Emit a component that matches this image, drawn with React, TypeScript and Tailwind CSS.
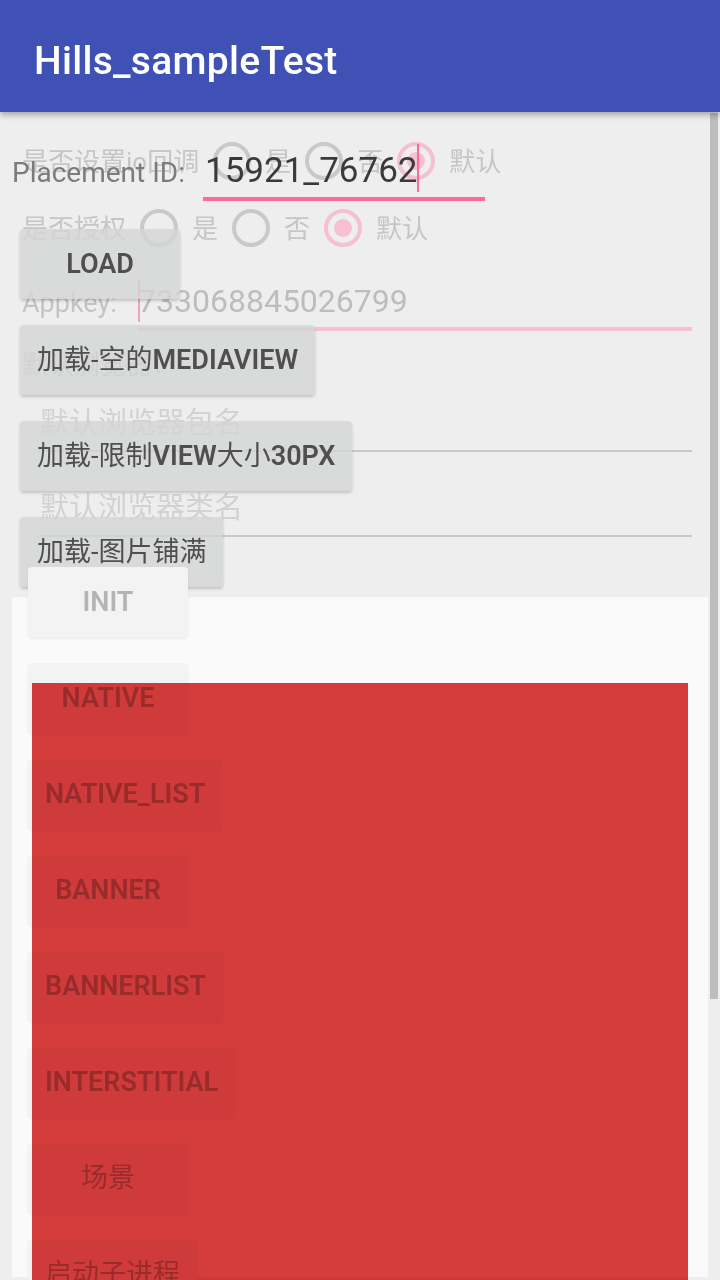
import React from 'react';

const font = "font-['Roboto','Noto_Sans_CJK_SC',sans-serif]";

// Latin runs get Roboto Medium look, CJK stays regular like on the device
function Label({ text }: { text: string }) {
  const parts = text.split(/([A-Za-z0-9_]+)/).filter(Boolean);
  return (
    <>
      {parts.map((p, i) =>
        /[A-Za-z0-9_]/.test(p) ? (
          <span key={i} className="font-semibold">{p}</span>
        ) : (
          <span key={i} className="font-normal">{p}</span>
        )
      )}
    </>
  );
}

function Radio({ checked }: { checked?: boolean }) {
  if (checked) {
    return (
      <span className="w-[38px] h-[38px] rounded-full border-[4px] border-[#f5c0d1] flex items-center justify-center shrink-0">
        <span className="w-[18px] h-[18px] rounded-full bg-[#f5c0d1]" />
      </span>
    );
  }
  return <span className="w-[38px] h-[38px] rounded-full border-[4px] border-[#c9c9c9] shrink-0" />;
}

function RadioRow({ label }: { label: string }) {
  return (
    <div className="flex items-center gap-[14px] h-[48px] text-[26px] text-[#c6c6c6]">
      <span className="pt-[3px]">{label}</span>
      <Radio />
      <span className="pt-[3px]">是</span>
      <Radio />
      <span className="pt-[3px]">否</span>
      <Radio checked />
      <span className="pt-[3px]">默认</span>
    </div>
  );
}

function GrayButton({ text }: { text: string }) {
  return (
    <div className="h-[70px] min-w-[160px] self-start px-[17px] rounded-[4px] bg-[#d3d4d4]/80 shadow-[0_2px_3px_rgba(0,0,0,0.18)] flex items-center justify-center text-[27px] text-[#4f4f4f]">
      <Label text={text} />
    </div>
  );
}

function FadedButton({ text }: { text: string }) {
  return (
    <div className="h-[70px] min-w-[160px] self-start px-[17px] rounded-[4px] bg-[#f3f3f3] shadow-[0_2px_3px_rgba(0,0,0,0.06)] flex items-center justify-center text-[27px] text-[#b4b4b4]">
      <Label text={text} />
    </div>
  );
}

export default function App() {
  const lower = ['INIT', 'NATIVE', 'NATIVE_LIST', 'BANNER', 'BANNERLIST', 'INTERSTITIAL', '场景', '启动子进程'];

  return (
    <div className={`relative w-[720px] h-[1280px] overflow-hidden bg-[#eeeeee] ${font}`}>
      {/* toolbar */}
      <div className="relative z-30 h-[112px] bg-[#3f51b5] shadow-[0_3px_6px_rgba(0,0,0,0.3)] flex items-center pl-[34px] pt-[10px]">
        <span className="text-white text-[39px] font-medium tracking-[0.3px]">Hills_sampleTest</span>
      </div>

      {/* faded settings form underneath */}
      <div className="absolute top-[113px] left-0 right-0 flex flex-col pl-[22px]">
        <div className="mt-[24px]">
          <RadioRow label="是否设置io回调" />
        </div>
        <div className="mt-[19px]">
          <RadioRow label="是否授权" />
        </div>
        <div className="mt-[23px] h-[56px] flex items-center">
          <span className="text-[27px] text-[#c4c4c4] w-[116px] shrink-0">Appkey:</span>
          <div className="relative flex-1 mr-[28px] h-full border-b-[4px] border-[#f5c0d1] flex items-center">
            <span className="absolute left-0 top-[5px] w-[2px] h-[42px] bg-[#eda3bb]" />
            <span className="text-[32px] text-[#bdbdbd] leading-none">733068845026799</span>
          </div>
        </div>
        <div className="mt-[14px] h-[40px] flex items-center text-[26px] text-[#c6c6c6]">默认浏览器：</div>
        <div className="mt-[13px] ml-[16px] mr-[28px] h-[54px] border-b-[2px] border-[#c8c8c8] flex items-center pl-[2px] text-[29px] text-[#d2d2d2]">
          默认浏览器包名
        </div>
        <div className="mt-[31px] ml-[16px] mr-[28px] h-[54px] border-b-[2px] border-[#c8c8c8] flex items-center pl-[2px] text-[29px] text-[#d2d2d2]">
          默认浏览器类名
        </div>
      </div>

      {/* placement + load buttons */}
      <div className="absolute top-[113px] left-0 right-0 flex flex-col">
        <div className="mt-[30px] h-[58px] flex items-center pl-[12px]">
          <span className="text-[28px] text-[#7b7b7b] w-[191px] shrink-0 pt-[2px]">Placement ID:</span>
          <div className="relative w-[282px] h-full border-b-[4px] border-[#ff6a98] flex items-center pl-[2px]">
            <span className="text-[35px] text-[#3a3a3a] leading-none">15921_76762</span>
            <span className="absolute left-[214px] top-[1px] w-[2px] h-[48px] bg-[#ff6a98]" />
          </div>
        </div>
        <div className="mt-[28px] pl-[20px] flex flex-col gap-[26px]">
          <GrayButton text="LOAD" />
          <GrayButton text="加载-空的MEDIAVIEW" />
          <GrayButton text="加载-限制VIEW大小30PX" />
          <GrayButton text="加载-图片铺满" />
        </div>
      </div>

      {/* white panel */}
      <div className="absolute top-[597px] left-[12px] w-[696px] h-[680px] bg-[#fafafa]" />

      {/* faded ad buttons */}
      <div className="absolute top-[567px] left-[28px] flex flex-col gap-[26px]">
        {lower.map((t) => (
          <FadedButton key={t} text={t} />
        ))}
      </div>

      {/* red view, multiplied over the buttons */}
      <div className="absolute top-[683px] left-[32px] w-[656px] h-[597px] bg-[#da3d3d] mix-blend-multiply" />

      {/* scrollbar */}
      <div className="absolute top-[113px] right-[2px] w-[8px] h-[886px] bg-[#bdbdbd]" />
    </div>
  );
}
